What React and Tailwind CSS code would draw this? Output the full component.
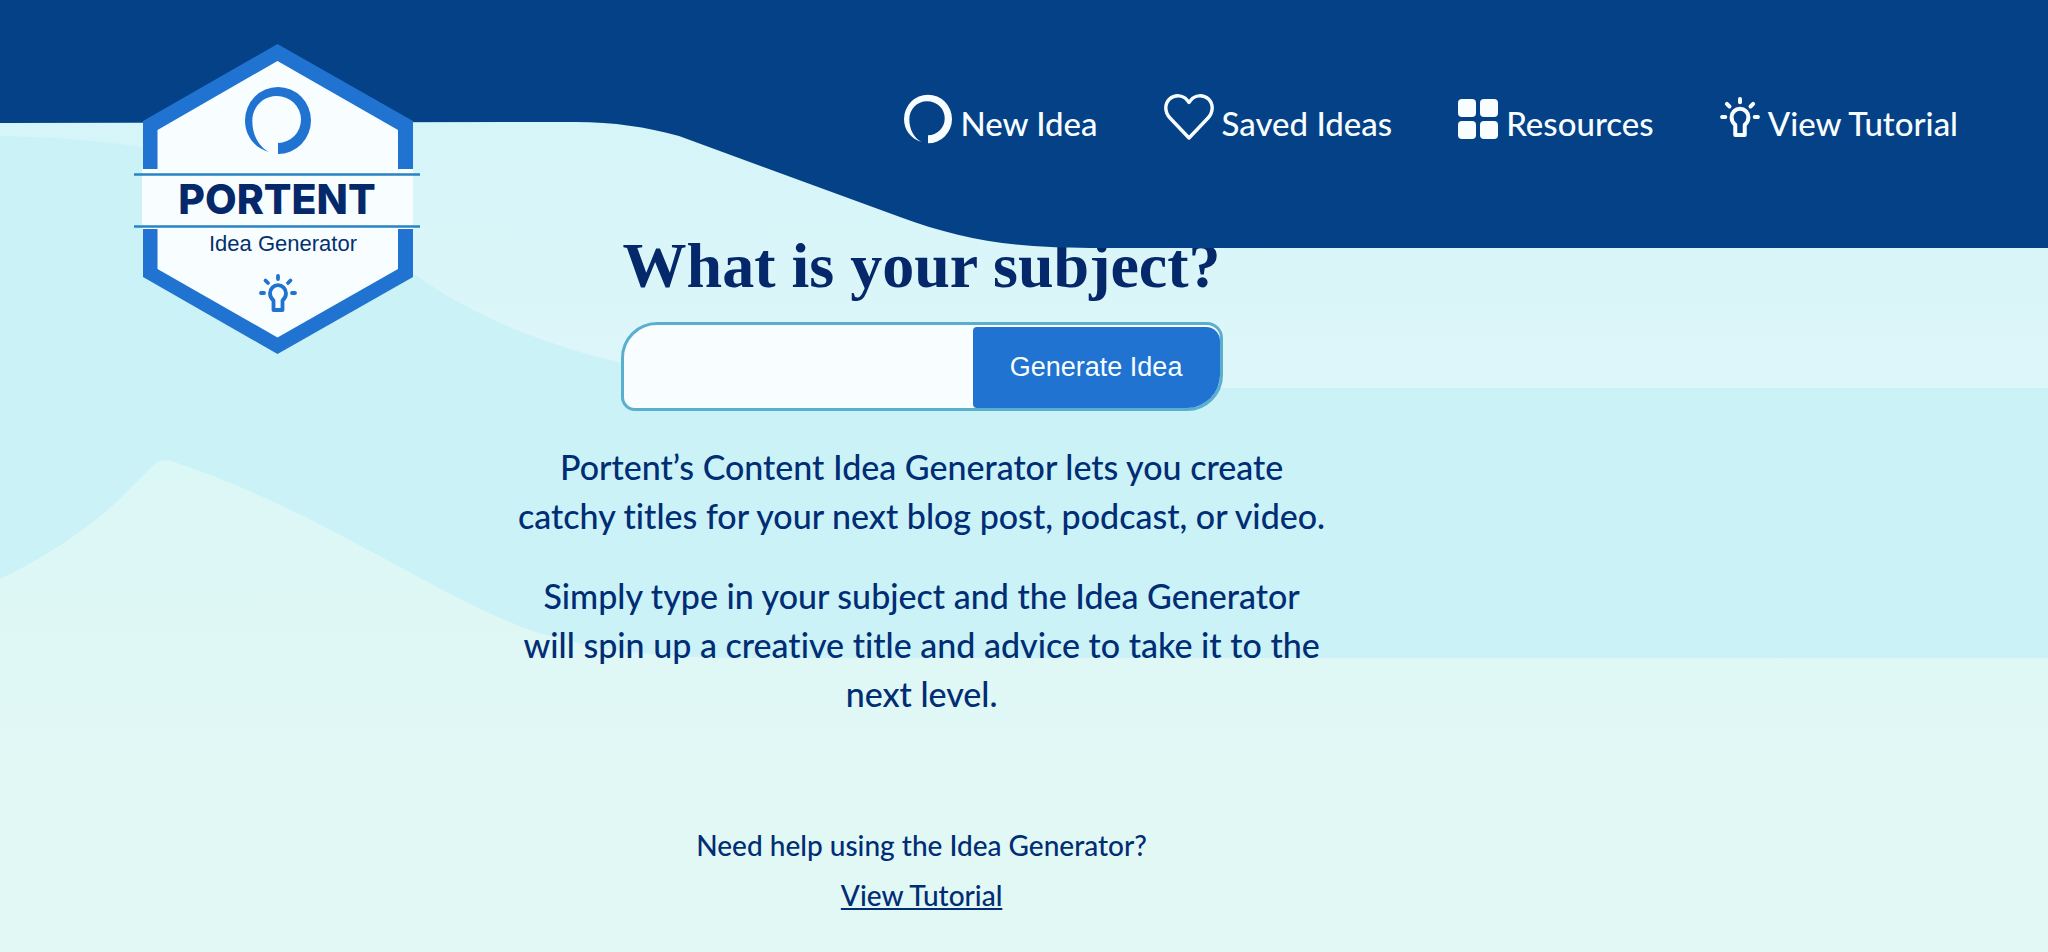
import React, { useState } from 'react';

const RingIcon = ({ className }) => (
    <svg viewBox="0 0 66 67" fill="currentColor" className={className} aria-hidden="true">
        <path d="M33 67V56A23.5 23.5 0 0 0 56 32.5 24 23.5 0 0 0 31.5 9C18 9 7.3 20 7.3 34 7.3 48 14 60 24 65 10 61 0 49 0 33.5A33 33.5 0 0 1 66 33.5 33 33.5 0 0 1 33 67Z" />
    </svg>
);

const HeartIcon = ({ className }) => (
    <svg viewBox="0 0 50 46" fill="none" stroke="currentColor" strokeWidth="3.4" strokeLinejoin="round" className={className} aria-hidden="true">
        <path d="M25 44 6 24C.5 18 .5 10 5.5 5 11 .2 19 1 23 6L25 8.500 27 6C31 1 39 .2 44.500 5 49.500 10 49.500 18 44 24Z" />
    </svg>
);

const GridIcon = ({ className }) => (
    <svg viewBox="0 0 40 40" fill="currentColor" className={className} aria-hidden="true">
        <rect x="0" y="0" width="18" height="18" rx="4" />
        <rect x="22" y="0" width="18" height="18" rx="4" />
        <rect x="0" y="22" width="18" height="18" rx="4" />
        <rect x="22" y="22" width="18" height="18" rx="4" />
    </svg>
);

const BulbIcon = ({ className }) => (
    <svg viewBox="0 0 38 38" fill="none" stroke="currentColor" strokeWidth="3.8" strokeLinecap="round" strokeLinejoin="round" className={className} aria-hidden="true">
        <path d="M19 2V5M2 19H5M33 19H36M6.500 6.500 9 9M31.500 6.500 29 9" />
        <path d="M14.500 26.500C12.500 24.800 11 22.500 11 19.200A8 8 0 0 1 27 19.200C27 22.500 25.500 24.800 23.500 26.500V36H14.500Z" />
    </svg>
);

const navItems = [
    { label: 'New Idea', icon: <RingIcon className="h-[50px] w-12" /> },
    { label: 'Saved Ideas', icon: <HeartIcon className="mb-1 h-[46px] w-[50px]" /> },
    { label: 'Resources', icon: <GridIcon className="size-10" /> },
    { label: 'View Tutorial', icon: <BulbIcon className="mb-1 size-10" /> },
];

const Logo = () => (
    <a href="#home" className="relative flex h-[310px] w-[286px] shrink-0 flex-col items-center text-[#2073d0]">
        <svg viewBox="0 0 286 310" className="absolute inset-0 h-full w-full" aria-hidden="true">
            <path d="M143.500 0 279 77V233L143.500 310 9 233V77Z" fill="#2073d0" />
            <path d="M143.500 17 264 86V225L143.500 293.500 23.500 225V86Z" fill="#f8feff" />
            <path d="M8 125H279V185H8Z" fill="#f8feff" />
            <path d="M0 130.500H286M0 182.500H286" stroke="#2a83c4" strokeWidth="2.500" />
        </svg>
        <RingIcon className="relative mt-[43px] ml-[2px] h-[67px] w-[66px]" />
        <span className="relative mt-[21px] font-[Inter] text-[41px] leading-[48px] font-extrabold text-[#05286b]">PORTENT</span>
        <span className="relative mt-[7px] ml-[12px] text-[22px] leading-[28px] text-[#05306f]">Idea Generator</span>
        <BulbIcon className="relative mt-[16px] ml-[2px] size-[38px]" />
    </a>
);

const Header = () => (
    <header className="relative z-10 flex h-[234px] items-start justify-between pt-11 pr-[90px] pl-[134px]">
        <svg viewBox="0 0 2048 248" preserveAspectRatio="none" className="absolute inset-x-0 top-0 h-[248px] w-full" aria-hidden="true">
            <path d="M0 0H2048V248H1090C1010 248 960 239 900 217L679 136C645 127 615 122 575 122L0 123Z" fill="#044187" />
        </svg>
        <Logo />
        <nav className="relative mt-11 flex gap-[66px]">
            {navItems.map((item) => (
                <a key={item.label} href="#nav" className="flex h-[62px] items-center gap-2 text-[33px] whitespace-nowrap text-[#f8feff]">
                    {item.icon}
                    <span className="pt-[9px] font-[Lato] font-medium">{item.label}</span>
                </a>
            ))}
        </nav>
    </header>
);

const Hills = () => (
    <svg viewBox="0 0 2048 952" preserveAspectRatio="none" className="absolute inset-0 h-full w-full" aria-hidden="true">
        <defs>
            <linearGradient id="sky" x1="0" y1="0" x2="0" y2="1">
                <stop offset="0.1" stopColor="#d5f5f9" />
                <stop offset="0.4" stopColor="#ddf6f9" />
            </linearGradient>
            <linearGradient id="ground" x1="0" y1="0" x2="0" y2="1">
                <stop offset="0" stopColor="#dbf7f6" />
                <stop offset="0.7" stopColor="#e2f8f5" />
            </linearGradient>
        </defs>
        <path d="M0 0H2048V952H0Z" fill="url(#sky)" />
        <path d="M0 136C50 137 95 140 142 147 260 165 340 222 414 274 450 300 490 320 527 334 556 345 587 355 618 362 700 382 780 388 870 388H2048V952H0Z" fill="#caf2f7" />
        <path d="M0 579C35 562 65 544 98 518 125 497 143 474 155 464 159 460 165 459 171 461 230 480 290 508 346 538L424 580C462 600 500 620 536 632 600 652 670 658 750 658H2048V952H0Z" fill="url(#ground)" />
    </svg>
);

const App = () => {
    const [subject, setSubject] = useState('');

    const handleSubmit = (e) => {
        e.preventDefault();
    };

    return (
        <div className="relative min-h-screen overflow-hidden font-['Liberation_Sans',sans-serif] text-[#002d74]">
            <Hills />
            <Header />
            <main className="relative flex w-[90%] flex-col items-center text-center">
                <h1 className="font-['Liberation_Serif',serif] text-[64px] leading-[64px] font-bold text-[#05286b]">What is your subject?</h1>
                <form
                    onSubmit={handleSubmit}
                    className="mt-6 flex h-[89px] w-[602px] rounded-tl-[36px] rounded-tr-[16px] rounded-br-[36px] rounded-bl-[14px] border-[3px] border-[#5aafcf] bg-[#f8feff]"
                >
                    <input
                        type="text"
                        aria-label="Subject"
                        value={subject}
                        onChange={(e) => setSubject(e.target.value)}
                        className="min-w-0 flex-1 bg-transparent px-6 text-[27px] outline-none"
                    />
                    <button type="submit" className="mt-[2px] w-[247px] rounded-tl-[4px] rounded-tr-[14px] rounded-br-[33px] rounded-bl-[4px] bg-[#2073d0] text-[27px] text-[#f8feff]">
                        Generate Idea
                    </button>
                </form>
                <div className="mt-[31px] flex w-[840px] max-w-full flex-col gap-[31px] font-[Lato] text-[34px] leading-[49px] font-medium [font-variant-ligatures:none]">
                    <p>
                        Portent’s Content Idea Generator lets you create
                        <br />
                        catchy titles for your next blog post, podcast, or video.
                    </p>
                    <p>
                        Simply type in your subject and the Idea Generator
                        <br />
                        will spin up a creative title and advice to take it to the
                        <br />
                        next level.
                    </p>
                </div>
                <div className="mt-[102px] flex flex-col items-center font-[Lato] text-[28px] leading-[50px] font-medium">
                    <p>Need help using the Idea Generator?</p>
                    <a href="#tutorial" className="underline">View Tutorial</a>
                </div>
            </main>
        </div>
    );
};

export default App;
